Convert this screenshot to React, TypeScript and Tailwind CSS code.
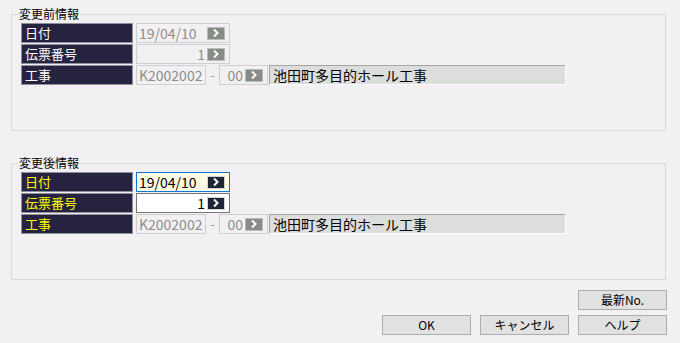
import React from "react";

const font = { fontFamily: '"Noto Sans CJK JP", "Noto Sans", sans-serif' };

function Arrow({ active }: { active?: boolean }) {
  return (
    <span
      className={
        "flex h-[13px] w-[18px] items-center justify-center border " +
        (active ? "border-[#d4d4d4] bg-[#1d2636]" : "border-[#b8bcb8] bg-[#878c87]")
      }
    >
      <svg width="6" height="8" viewBox="0 0 6 8">
        <path d="M1 0.5 L4.5 4 L1 7.5" fill="none" stroke="#fff" strokeWidth="2" />
      </svg>
    </span>
  );
}

function Label({ text, yellow }: { text: string; yellow?: boolean }) {
  return (
    <div
      className={
        "flex h-[20px] w-[112px] shrink-0 items-center border border-[#8f8f9c] bg-[#25233f] pl-[3px] text-[13px] " +
        (yellow ? "text-[#ffff00]" : "text-white")
      }
    >
      {text}
    </div>
  );
}

function Field({
  value,
  width,
  align = "left",
  mode = "disabled",
  arrow,
}: {
  value: string;
  width: string;
  align?: "left" | "right";
  mode?: "disabled" | "focus" | "normal";
  arrow?: "active" | "dim";
}) {
  const box =
    mode === "focus"
      ? "border-[#0a78d7] bg-[#fdfbe2] text-black"
      : mode === "normal"
      ? "border-[#777] bg-white text-black"
      : "border-[#cfcfcf] bg-[#f2f0f3] text-[#8d8d8d]";
  return (
    <div className={"flex h-[20px] shrink-0 items-center border pr-[4px] " + box + " " + width}>
      <span
        className={
          "flex-1 px-[2px] text-[14px] leading-none " + (align === "right" ? "text-right" : "text-left")
        }
      >
        {value}
      </span>
      {arrow && <Arrow active={arrow === "active"} />}
    </div>
  );
}

function Group({ title, after }: { title: string; after?: boolean }) {
  return (
    <div className="relative ml-[11px] h-[117px] w-[655px] border border-[#d9d8da] pl-[9px] pt-[8px]">
      <span className="absolute left-[6px] top-[-10px] bg-[#f2f0f3] px-px text-[12px] leading-[18px] text-black">
        {title}
      </span>
      <div className="flex flex-col gap-[1px]">
        <div className="flex items-center gap-[3px]">
          <Label text="日付" yellow={after} />
          <Field
            value="19/04/10"
            width="w-[94px]"
            mode={after ? "focus" : "disabled"}
            arrow={after ? "active" : "dim"}
          />
        </div>
        <div className="flex items-center gap-[3px]">
          <Label text="伝票番号" yellow={after} />
          <Field
            value="1"
            width="w-[94px]"
            align="right"
            mode={after ? "normal" : "disabled"}
            arrow={after ? "active" : "dim"}
          />
        </div>
        <div className="flex items-center">
          <Label text="工事" yellow={after} />
          <div className="ml-[3px] flex items-center">
            <Field value="K2002002" width="w-[70px]" />
            <span className="w-[13px] text-center text-[13px] text-[#9a9a9a]">-</span>
            <Field value="00" width="w-[49px]" align="right" arrow="dim" />
            <div className="ml-[1px] flex h-[20px] w-[297px] items-center border border-t-[#a5a5a5] border-l-[#a5a5a5] border-b-white border-r-white bg-[#dcdedb] pl-[3px] text-[14px] text-black">
              池田町多目的ホール工事
            </div>
          </div>
        </div>
      </div>
    </div>
  );
}

function Btn({ text }: { text: string }) {
  return (
    <button className="flex h-[20px] w-[89px] items-center justify-center border border-[#adadad] bg-[#e1e1e1] text-[12px] text-black">
      {text}
    </button>
  );
}

export default function App() {
  return (
    <div className="h-[343px] w-[680px] overflow-hidden bg-[#f2f0f3] pt-[14px]" style={font}>
      <Group title="変更前情報" />
      <div className="mt-[32px]">
        <Group title="変更後情報" after />
      </div>
      <div className="mt-[10px] flex flex-col items-end gap-[5px] pr-[13px]">
        <Btn text="最新No." />
        <div className="flex gap-[9px]">
          <Btn text="OK" />
          <Btn text="キャンセル" />
          <Btn text="ヘルプ" />
        </div>
      </div>
    </div>
  );
}
